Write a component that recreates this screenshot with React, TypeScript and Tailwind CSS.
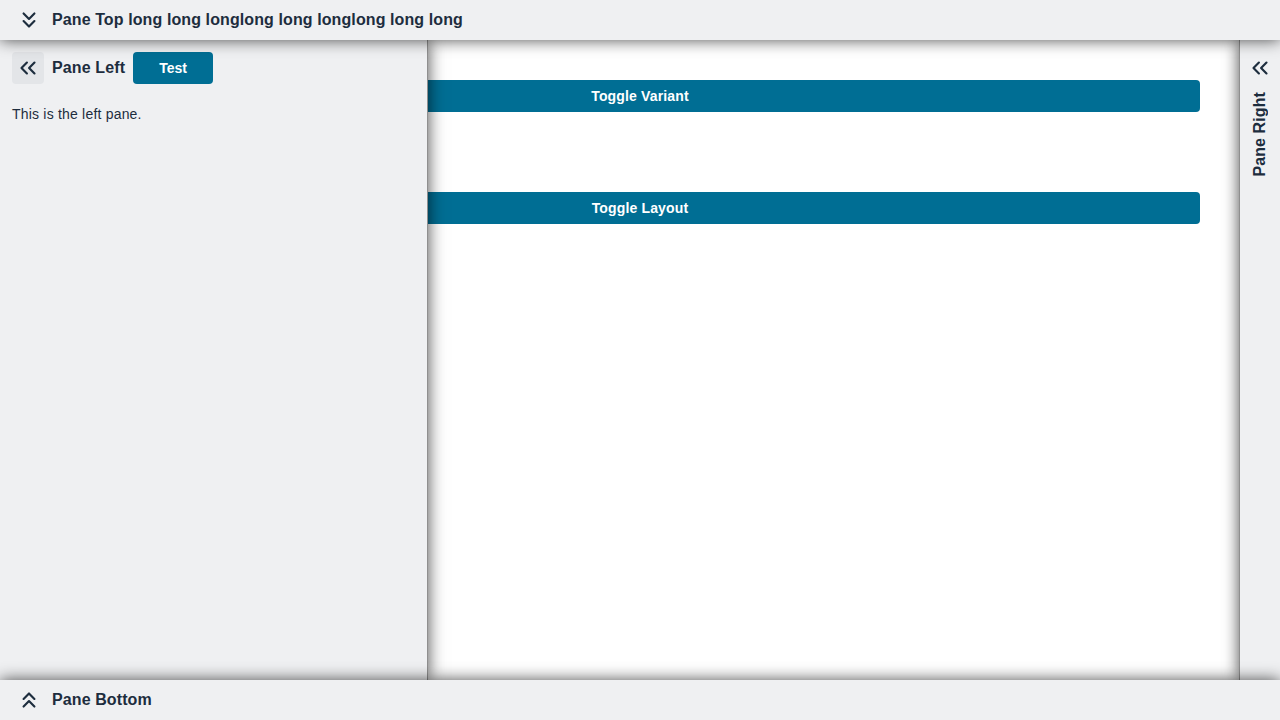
import { ChevronsDown, ChevronsLeft, ChevronsUp } from "lucide-react"

const font = { fontFamily: '"Liberation Sans", Arial, sans-serif' }

export default function App() {
  return (
    <div className="h-screen w-full flex flex-col overflow-hidden bg-white text-[#1d2d3e]" style={font}>
      <header className="relative z-30 h-10 shrink-0 flex items-center gap-2.5 pl-4 bg-[#eff0f2] shadow-[0_0_16px_rgba(0,0,0,0.7)]">
        <ChevronsDown className="w-[26px] h-[26px]" strokeWidth={2} />
        <h1 className="text-base font-bold tracking-[0.1px]">Pane Top long long longlong long longlong long long</h1>
      </header>

      <div className="relative flex-1 min-h-0">
        <main className="flex flex-col gap-20 px-20 pt-10">
          <button className="h-8 rounded-sm bg-[#006e94] text-white text-sm font-bold tracking-[0.15px]">Toggle Variant</button>
          <button className="h-8 rounded-sm bg-[#006e94] text-white text-sm font-bold tracking-[0.15px]">Toggle Layout</button>
        </main>

        <aside className="absolute z-20 left-0 top-0 bottom-0 w-[428px] bg-[#eff0f2] border-r border-[#8f8f8f] shadow-[0_0_16px_rgba(0,0,0,0.7)] p-3">
          <div className="flex items-center">
            <button className="w-8 h-8 flex items-center justify-center rounded-sm bg-[#e3e5e8]">
              <ChevronsLeft className="w-[26px] h-[26px]" strokeWidth={2} />
            </button>
            <h2 className="ml-2 text-base font-bold tracking-[0.12px]">Pane Left</h2>
            <button className="ml-2 w-20 h-8 rounded-sm bg-[#006e94] text-white text-sm font-bold">Test</button>
          </div>
          <p className="mt-5 text-sm leading-5 tracking-[0.2px]">This is the left pane.</p>
        </aside>

        <aside className="absolute z-20 right-0 top-0 bottom-0 w-[41px] bg-[#eff0f2] border-l border-[#8f8f8f] shadow-[0_0_16px_rgba(0,0,0,0.7)] flex flex-col items-center pt-[15px]">
          <ChevronsLeft className="w-[26px] h-[26px]" strokeWidth={2} />
          <h2 className="mt-[11px] text-base font-bold tracking-[0.1px] [writing-mode:vertical-rl] rotate-180">Pane Right</h2>
        </aside>
      </div>

      <footer className="relative z-30 h-10 shrink-0 flex items-center gap-2.5 pl-4 bg-[#eff0f2] shadow-[0_0_16px_rgba(0,0,0,0.7)]">
        <ChevronsUp className="w-[26px] h-[26px]" strokeWidth={2} />
        <h2 className="text-base font-bold tracking-[0.1px]">Pane Bottom</h2>
      </footer>
    </div>
  )
}
